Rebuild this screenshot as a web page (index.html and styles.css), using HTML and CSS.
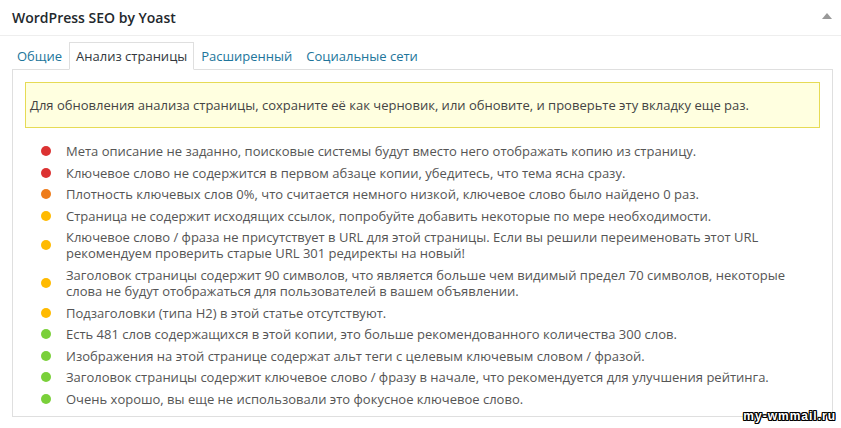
FILE: index.html
```html
<!DOCTYPE html>
<html lang="ru">
<head>
    <meta charset="UTF-8">
    <title>WordPress SEO by Yoast</title>
    <link rel="stylesheet" href="styles.css">
</head>
<body>
<div class="postbox">
    <div class="hndle">
        <h2>WordPress SEO by Yoast</h2>
        <span class="toggle"></span>
    </div>
    <ul class="tabs">
        <li>Общие</li>
        <li class="active">Анализ страницы</li>
        <li>Расширенный</li>
        <li>Социальные сети</li>
    </ul>
    <div class="panel">
        <div class="notice">Для обновления анализа страницы, сохраните её как черновик, или обновите, и проверьте эту вкладку еще раз.</div>
        <ul class="results">
            <li><span class="dot bad"></span><span>Мета описание не заданно, поисковые системы будут вместо него отображать копию из страницу.</span></li>
            <li><span class="dot bad"></span><span>Ключевое слово не содержится в первом абзаце копии, убедитесь, что тема ясна сразу.</span></li>
            <li><span class="dot poor"></span><span>Плотность ключевых слов 0%, что считается немного низкой, ключевое слово было найдено 0 раз.</span></li>
            <li><span class="dot ok"></span><span>Страница не содержит исходящих ссылок, попробуйте добавить некоторые по мере необходимости.</span></li>
            <li><span class="dot ok"></span><span>Ключевое слово / фраза не присутствует в URL для этой страницы. Если вы решили переименовать этот URL рекомендуем проверить старые URL 301 редиректы на новый!</span></li>
            <li><span class="dot ok"></span><span>Заголовок страницы содержит 90 символов, что является больше чем видимый предел 70 символов, некоторые слова не будут отображаться для пользователей в вашем объявлении.</span></li>
            <li><span class="dot ok"></span><span>Подзаголовки (типа H2) в этой статье отсутствуют.</span></li>
            <li><span class="dot good"></span><span>Есть 481 слов содержащихся в этой копии, это больше рекомендованного количества 300 слов.</span></li>
            <li><span class="dot good"></span><span>Изображения на этой странице содержат альт теги с целевым ключевым словом / фразой.</span></li>
            <li><span class="dot good"></span><span>Заголовок страницы содержит ключевое слово / фразу в начале, что рекомендуется для улучшения рейтинга.</span></li>
            <li><span class="dot good"></span><span>Очень хорошо, вы еще не использовали это фокусное ключевое слово.</span></li>
        </ul>
    </div>
</div>
<div class="watermark">my-wmmail.ru</div>
</body>
</html>
```

FILE: styles.css
```css
body,div,ul,li,h2{margin:0;padding:0;}
ul{list-style-type:none;}
body{background:#fff;font:13px/16px "Open Sans","Liberation Sans",sans-serif;color:#555;}

.hndle{display:flex;align-items:center;justify-content:space-between;height:35px;padding:0 9px 0 12px;border-bottom:1px solid #eee;}
.hndle h2{font-size:14px;font-weight:600;color:#23282d;line-height:20px;}
.toggle{width:0;height:0;border-left:5px solid transparent;border-right:5px solid transparent;border-bottom:6px solid #999;margin-top:-4px;}

.tabs{display:flex;margin-top:6px;padding-left:10px;}
.tabs li{line-height:26px;padding:0 6px;border:1px solid transparent;color:#21759b;margin-bottom:-1px;}
.tabs li.active{position:relative;background:#fff;color:#32373c;border-color:#dfdfdf;border-bottom-color:#fff;}

.panel{margin:0 8px 0 12px;padding:12px 12px 3px;border:1px solid #dfdfdf;}
.notice{background:#ffffe0;border:1px solid #e6db55;padding:14px 4px;color:#444;}

.results{margin-top:15px;padding-left:16px;}
.results li{display:flex;align-items:center;margin-bottom:5.6px;}
.dot{flex:none;width:10px;height:10px;border-radius:50%;margin-right:15px;}
.dot.bad{background:#dc3232;}
.dot.poor{background:#ee7c1b;}
.dot.ok{background:#ffba00;}
.dot.good{background:#7ad03a;}

.watermark{position:absolute;right:5px;top:409px;font:bold 12px/14px "Liberation Sans",Arial,sans-serif;letter-spacing:1px;color:#fff;
    text-shadow:1px 0 #000,-1px 0 #000,0 1px #000,0 -1px #000,1px 1px #000,-1px -1px #000,1px -1px #000,-1px 1px #000;}
```
